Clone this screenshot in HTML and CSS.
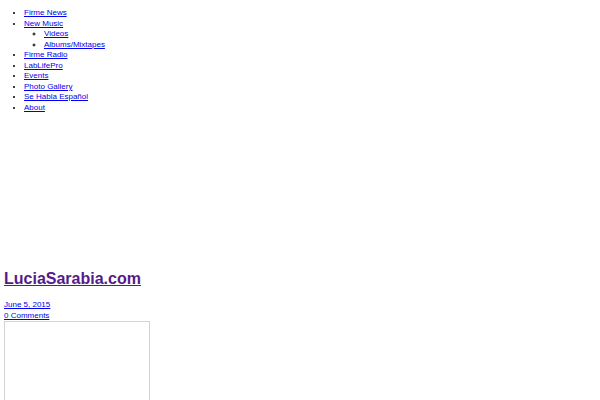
FILE: index.html
```html
<!DOCTYPE html>
<html lang="en">
<head>
    <meta charset="UTF-8">
    <title>LuciaSarabia.com</title>
    <link rel="stylesheet" href="styles.css">
</head>
<body>
<ul class="menu">
    <li><a href="#">Firme News</a></li>
    <li><a href="#">New Music</a>
        <ul class="sub_menu">
            <li><a href="#">Videos</a></li>
            <li><a href="#">Albums/Mixtapes</a></li>
        </ul>
    </li>
    <li><a href="#">Firme Radio</a></li>
    <li><a href="#">LabLifePro</a></li>
    <li><a href="#">Events</a></li>
    <li><a href="#">Photo Gallery</a></li>
    <li><a href="#">Se Habla Español</a></li>
    <li><a href="#">About</a></li>
</ul>
<div class="header_space"></div>
<h1 class="post_title"><a class="visited" href="#">LuciaSarabia.com</a></h1>
<div class="post_meta">
    <a href="#">June 5, 2015</a><br>
    <a href="#">0 Comments</a>
</div>
<div class="post_image"></div>
</body>
</html>
```

FILE: styles.css
```css
body {
    margin: 4px;
    font-family: "Liberation Sans", Arial, sans-serif;
    font-size: 8px;
    line-height: 10.5px;
}

a {
    color: #0000ee;
}

a.visited {
    color: #551a8b;
}

.menu {
    margin: 4px 0 0 0;
    padding-left: 20px;
}

.sub_menu {
    margin: 0;
    padding-left: 20px;
    list-style-type: circle;
}

.header_space {
    height: 155px;
}

.post_title {
    margin: 0;
    font-size: 16px;
    font-weight: bold;
    line-height: 21px;
}

.post_meta {
    margin-top: 11px;
}

.post_image {
    width: 144px;
    height: 100px;
    border: 1px solid #d4d4d4;
}
```
